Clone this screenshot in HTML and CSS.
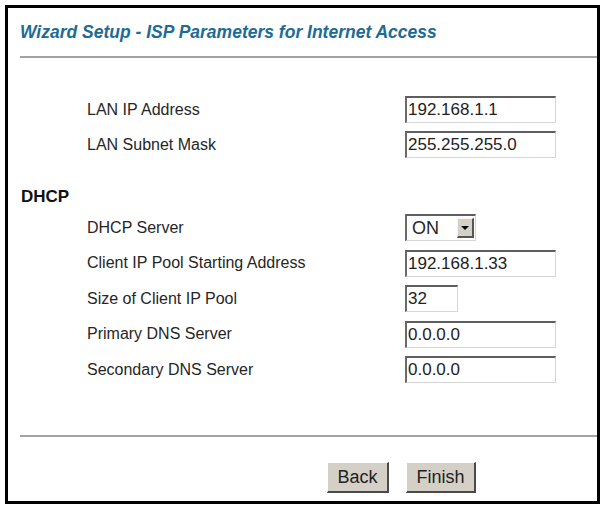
FILE: index.html
```html
<!DOCTYPE html>
<html>
<head>
<meta charset="utf-8">
<title>Wizard Setup - ISP Parameters for Internet Access</title>
<link rel="stylesheet" href="styles.css">
</head>
<body>
<div class="frame">
  <h1 class="title">Wizard Setup - ISP Parameters for Internet Access</h1>
  <div class="rule"></div>

  <div class="group lan">
    <div class="row"><span class="label">LAN IP Address</span><span class="field wide">192.168.1.1</span></div>
    <div class="row"><span class="label">LAN Subnet Mask</span><span class="field wide">255.255.255.0</span></div>
  </div>

  <div class="heading">DHCP</div>
  <div class="group dhcp">
    <div class="row"><span class="label">DHCP Server</span>
      <span class="select"><span class="select-value">ON</span><span class="select-btn"><span class="arrow"></span></span></span>
    </div>
    <div class="row"><span class="label">Client IP Pool Starting Address</span><span class="field wide">192.168.1.33</span></div>
    <div class="row"><span class="label">Size of Client IP Pool</span><span class="field small">32</span></div>
    <div class="row"><span class="label">Primary DNS Server</span><span class="field wide">0.0.0.0</span></div>
    <div class="row"><span class="label">Secondary DNS Server</span><span class="field wide">0.0.0.0</span></div>
  </div>

  <div class="rule bottom"></div>
  <div class="buttons">
    <span class="btn back">Back</span>
    <span class="btn finish">Finish</span>
  </div>
</div>
</body>
</html>
```

FILE: styles.css
```css
html, body {
  margin: 0;
  padding: 0;
  background: #ffffff;
}
body {
  font-family: "Liberation Sans", Arial, sans-serif;
  color: #262626;
}
.frame {
  margin: 5px 1px 0 5px;
  border: 3px solid #000000;
  height: 499px;
  box-sizing: border-box;
  padding-top: 14px;
}
.title {
  margin: 0 0 0 12px;
  font-size: 17.5px;
  line-height: 20px;
  font-weight: bold;
  font-style: italic;
  color: #206b96;
}
.rule {
  margin: 14px 0 0 12px;
  height: 2px;
  background: #a3a3a3;
}
.group {
  display: flex;
  flex-direction: column;
  padding-left: 79px;
}
.lan {
  margin-top: 38px;
  gap: 8px;
}
.dhcp {
  margin-top: 7px;
  gap: 8.5px;
}
.row {
  display: flex;
  align-items: center;
  height: 27px;
}
.label {
  width: 318px;
  font-size: 16px;
  line-height: 18px;
}
.heading {
  margin: 29px 0 0 13px;
  font-size: 17px;
  line-height: 20px;
  font-weight: bold;
  color: #111111;
}
.field {
  box-sizing: border-box;
  height: 27px;
  border-style: solid;
  border-width: 2px 1px 1px 2px;
  border-color: #5e5e5e #d6d6d6 #d6d6d6 #6a6a6a;
  background: #ffffff;
  font-size: 17px;
  line-height: 24px;
  padding-left: 1px;
  color: #222222;
}
.wide { width: 151px; }
.small { width: 53px; }
.select {
  box-sizing: border-box;
  width: 71px;
  height: 27px;
  display: flex;
  align-items: center;
  border-style: solid;
  border-width: 2px 1px 1px 2px;
  border-color: #5e5e5e #d6d6d6 #d6d6d6 #6a6a6a;
  background: #ffffff;
}
.select-value {
  flex: 1;
  font-size: 18px;
  line-height: 22px;
  padding-left: 5px;
}
.select-btn {
  width: 17px;
  height: 20px;
  margin-right: 1px;
  background: #d4d0c8;
  border-style: solid;
  border-width: 1px 2px 2px 1px;
  border-color: #f4f4f4 #555555 #555555 #f4f4f4;
  box-sizing: border-box;
  display: flex;
  align-items: center;
  justify-content: center;
}
.arrow {
  width: 0;
  height: 0;
  border-left: 4px solid transparent;
  border-right: 4px solid transparent;
  border-top: 4px solid #000000;
}
.bottom {
  margin-top: 52px;
}
.buttons {
  display: flex;
  gap: 17px;
  padding-left: 319px;
  margin-top: 25px;
}
.btn {
  box-sizing: border-box;
  height: 31px;
  display: flex;
  align-items: center;
  justify-content: center;
  background: #d4d0c8;
  border-style: solid;
  border-width: 1px 2px 2px 1px;
  border-color: #ffffff #4a4a4a #4a4a4a #ffffff;
  font-size: 18px;
  color: #222222;
}
.back { width: 62px; }
.finish { width: 70px; }
```
